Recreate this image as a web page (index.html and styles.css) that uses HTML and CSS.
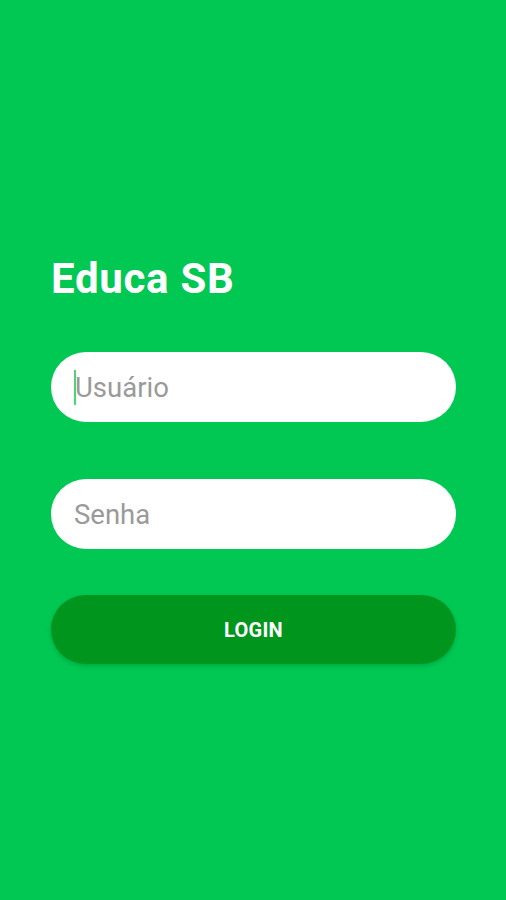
FILE: index.html
```html
<!DOCTYPE html>
<html lang="pt">
<head>
<meta charset="utf-8">
<title>Educa SB</title>
<link rel="stylesheet" href="styles.css">
</head>
<body>
  <main class="screen">
    <h1 class="title">Educa SB</h1>
    <div class="field field-user"><span class="caret"></span><span class="placeholder">Usuário</span></div>
    <div class="field field-pass"><span class="placeholder">Senha</span></div>
    <button class="login" type="button">LOGIN</button>
  </main>
</body>
</html>
```
FILE: styles.css
```css
html, body {
  margin: 0;
  padding: 0;
}
body {
  background: #00c853;
  font-family: Roboto, "Noto Sans", sans-serif;
  width: 506px;
  height: 900px;
  overflow: hidden;
}
.screen {
  display: flex;
  flex-direction: column;
  padding: 254px 50px 0 51px;
}
.title {
  margin: 0;
  font-size: 42px;
  line-height: 49px;
  font-weight: 700;
  letter-spacing: 0.7px;
  color: #ffffff;
}
.field {
  box-sizing: border-box;
  height: 70px;
  border-radius: 35px;
  background: #ffffff;
  display: flex;
  align-items: center;
  padding-left: 23px;
}
.field-user {
  margin-top: 49px;
}
.field-pass {
  margin-top: 57px;
}
.caret {
  width: 2px;
  height: 35px;
  background: #4cd47a;
}
.placeholder {
  font-size: 27.5px;
  color: #9a9a9a;
  line-height: 34px;
  padding-top: 2px;
}
.field-user .placeholder {
  margin-left: -1px;
}
.login {
  margin-top: 46px;
  height: 69px;
  border: none;
  border-radius: 35px;
  background: #00961e;
  color: #ffffff;
  font-family: Roboto, "Noto Sans", sans-serif;
  font-weight: 700;
  font-size: 20px;
  letter-spacing: 0.3px;
  box-shadow: 0 2px 4px rgba(0, 80, 20, 0.25);
  padding: 0;
}
```
